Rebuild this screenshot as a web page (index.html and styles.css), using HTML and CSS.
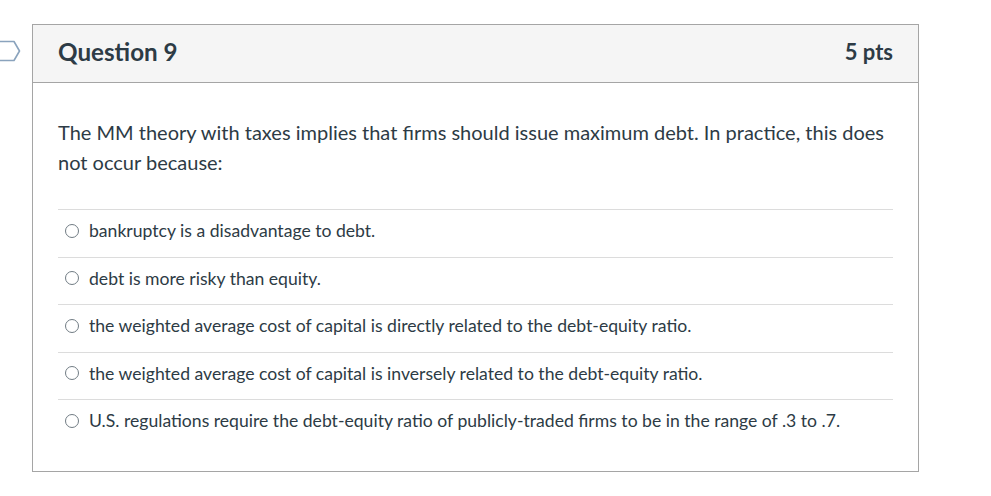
FILE: index.html
```html
<!DOCTYPE html>
<html>
<head>
<meta charset="utf-8">
<link rel="stylesheet" href="styles.css">
</head>
<body>
<div class="page">
  <svg class="marker" width="22" height="22" viewBox="0 0 22 22">
    <path d="M-3 1.5 H14 L19.5 11 L14 20.5 H-3" fill="none" stroke="#8aa3bd" stroke-width="1.6" stroke-linejoin="round"/>
  </svg>
  <div class="question">
    <div class="q-header">
      <h2 class="q-title">Question 9</h2>
      <div class="q-points">5 pts</div>
    </div>
    <div class="q-body">
      <p class="q-text">The MM theory with taxes implies that firms should issue maximum debt. In practice, this does not occur because:</p>
      <div class="answers">
        <label class="answer"><span class="radio"></span><span class="a-text">bankruptcy is a disadvantage to debt.</span></label>
        <label class="answer"><span class="radio"></span><span class="a-text">debt is more risky than equity.</span></label>
        <label class="answer"><span class="radio"></span><span class="a-text">the weighted average cost of capital is directly related to the debt-equity ratio.</span></label>
        <label class="answer"><span class="radio"></span><span class="a-text">the weighted average cost of capital is inversely related to the debt-equity ratio.</span></label>
        <label class="answer"><span class="radio"></span><span class="a-text">U.S. regulations require the debt-equity ratio of publicly-traded firms to be in the range of .3 to .7.</span></label>
      </div>
    </div>
  </div>
</div>
</body>
</html>
```
FILE: styles.css
```css
html, body {
  margin: 0;
  padding: 0;
  background: #ffffff;
}
body {
  font-family: Lato, "Open Sans", sans-serif;
  color: #2d3b45;
}
.page {
  position: relative;
  padding: 24px 0 0 32px;
  width: 887px;
}
.marker {
  position: absolute;
  left: 0;
  top: 40px;
  overflow: visible;
}
.question {
  border: 1px solid #a5a5a5;
  box-sizing: border-box;
  height: 448px;
}
.q-header {
  display: flex;
  justify-content: space-between;
  align-items: center;
  background: #f5f5f5;
  border-bottom: 1px solid #a5a5a5;
  padding: 0 25px 3px 25px;
  box-sizing: border-box;
  height: 58px;
}
.q-title {
  margin: 0;
  font-size: 24.2px;
  line-height: 30px;
  font-weight: 700;
  color: #2d3b45;
}
.q-points {
  font-size: 22px;
  line-height: 30px;
  font-weight: 700;
  color: #2d3b45;
}
.q-body {
  padding: 34px 25px 0 25px;
}
.q-text {
  margin: 0;
  font-size: 20px;
  line-height: 30px;
}
.answers {
  margin-top: 32px;
}
.answer {
  display: flex;
  align-items: center;
  border-top: 1px solid #dcdcdc;
  padding: 9px 0 14.5px 0;
  line-height: 23px;
  font-size: 17.6px;
}
.radio {
  width: 14px;
  height: 14px;
  border: 1px solid #717c84;
  border-radius: 50%;
  margin: 0 10px 0 7px;
  flex: none;
  box-sizing: border-box;
}
.a-text {
  color: #2d3b45;
}
```
